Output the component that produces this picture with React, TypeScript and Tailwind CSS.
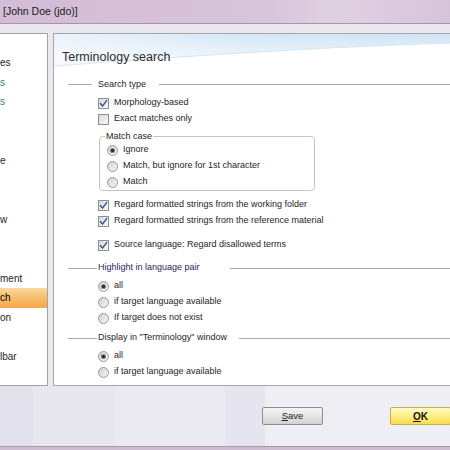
import React, { useId } from "react";

function CheckBox({ checked }: { checked?: boolean }) {
  const id = useId().replace(/:/g, "");
  return (
    <svg width="11" height="11" viewBox="0 0 11 11" className="shrink-0">
      <defs>
        <linearGradient id={`cb${id}`} x1="0" y1="0" x2="1" y2="1">
          <stop offset="0" stopColor="#d6d6d6" />
          <stop offset="1" stopColor="#fbfbfb" />
        </linearGradient>
      </defs>
      <rect x="0.5" y="0.5" width="10" height="10" fill={`url(#cb${id})`} stroke="#8e8f8f" />
      {checked && (
        <path d="M2.4 5.6 L4.5 8.1 L8.6 2.6" stroke="#3d5688" strokeWidth="1.5" fill="none" strokeLinecap="round" strokeLinejoin="round" />
      )}
    </svg>
  );
}

function Radio({ checked }: { checked?: boolean }) {
  const id = useId().replace(/:/g, "");
  return (
    <svg width="11" height="11" viewBox="0 0 11 11" className="shrink-0">
      <defs>
        <linearGradient id={`rb${id}`} x1="0" y1="0" x2="1" y2="1">
          <stop offset="0" stopColor="#cfcfcf" />
          <stop offset="1" stopColor="#f8f8f8" />
        </linearGradient>
      </defs>
      <circle cx="5.5" cy="5.5" r="5" fill={`url(#rb${id})`} stroke="#9a9a9a" />
      {checked && (
        <>
          <circle cx="5.5" cy="5.5" r="2.6" fill="#8a8a8a" />
          <circle cx="5.5" cy="5.5" r="1.6" fill="#262626" />
        </>
      )}
    </svg>
  );
}

function CheckRow({ label, checked }: { label: string; checked?: boolean }) {
  return (
    <div className="flex items-center gap-[5px] h-[16px]">
      <CheckBox checked={checked} />
      <span>{label}</span>
    </div>
  );
}

function RadioRow({ label, checked }: { label: string; checked?: boolean }) {
  return (
    <div className="flex items-center gap-[5px] h-[16px]">
      <Radio checked={checked} />
      <span>{label}</span>
    </div>
  );
}

const leftItems: { t: string; cls?: string; sel?: boolean }[] = [
  { t: "es" },
  { t: "s", cls: "text-[#3b7385]" },
  { t: "s", cls: "text-[#3b7385]" },
  { t: "" },
  { t: "" },
  { t: "e" },
  { t: "" },
  { t: "" },
  { t: "w" },
  { t: "" },
  { t: "" },
  { t: "ment" },
  { t: "ch", sel: true },
  { t: "on" },
  { t: "" },
  { t: "lbar" },
];

export default function App() {
  return (
    <div className="w-[450px] h-[450px] overflow-hidden flex flex-col font-['Liberation_Sans',Arial,sans-serif] text-[#1e1e1e] bg-[#ebe8ef]">
      {/* Title bar */}
      <div className="h-[24px] shrink-0 flex items-center pl-[3px] border-b border-[#a597a8] bg-[linear-gradient(90deg,#d3bcd6_0%,#d8c5da_60%,#e0d1e2_75%,#d6c3d9_100%)] text-[10.5px] text-[#1a1a1a]">
        [John Doe (jdo)]
      </div>
      <div className="h-[9px] shrink-0 bg-[#ebe7ef]" />

      {/* Panels */}
      <div className="h-[353px] shrink-0 flex gap-[5px]">
        {/* left list */}
        <div className="w-[48px] shrink-0 bg-white border-t border-r border-b border-[#a3a3a3] overflow-hidden pt-[19px] text-[10px]">
          {leftItems.map((it, i) => (
            <div
              key={i}
              className={`h-[19.6px] flex items-center whitespace-nowrap ${
                it.sel ? "bg-[linear-gradient(180deg,#fcd9a0_0%,#f8bd6c_50%,#f5a84a_100%)] text-black" : ""
              }`}
            >
              <span className={it.cls}>{it.t}</span>
            </div>
          ))}
        </div>

        {/* right panel */}
        <div className="flex-1 bg-white border-t border-l border-b border-[#a6a6a6] flex flex-col text-[9px] overflow-hidden">
          {/* header */}
          <div className="relative h-[43px] shrink-0 flex items-center pl-[8px] pt-[3px]">
            <svg className="absolute left-0 top-0" width="400" height="43" viewBox="0 0 400 43" preserveAspectRatio="none">
              <defs>
                <linearGradient id="hdrg" x1="0" y1="0" x2="0" y2="1">
                  <stop offset="0" stopColor="#cfe4f6" />
                  <stop offset="1" stopColor="#f4f9fd" />
                </linearGradient>
                <linearGradient id="hdrw" x1="0" y1="0" x2="1" y2="0">
                  <stop offset="0" stopColor="#ffffff" stopOpacity="0.55" />
                  <stop offset="0.5" stopColor="#ffffff" stopOpacity="0.1" />
                  <stop offset="1" stopColor="#ffffff" stopOpacity="0" />
                </linearGradient>
              </defs>
              <path d="M0 0 H400 V9 Q250 13 0 32 Z" fill="url(#hdrg)" />
              <path d="M0 0 H400 V9 Q250 13 0 32 Z" fill="url(#hdrw)" />
              <path d="M0 32 Q250 13 400 9" stroke="#d3e6f4" strokeWidth="1" fill="none" />
            </svg>
            <span className="relative text-[12.5px] text-[#2b2b2b]">Terminology search</span>
          </div>

          {/* Search type legend */}
          <div className="h-[15px] shrink-0 flex items-center pl-[14px]">
            <div className="w-[24px] h-px bg-[#a9a9a9]" />
            <span className="ml-[6px] text-[#262626]">Search type</span>
            <div className="flex-1 h-px bg-[#a9a9a9] ml-[13px]" />
          </div>

          <div className="pl-[44px] mt-[3px]">
            <CheckRow label="Morphology-based" checked />
            <CheckRow label="Exact matches only" />
          </div>

          <fieldset className="ml-[45px] mt-[3px] w-[216px] border border-[#c4c4c4] rounded-[4px] pl-[7px] pb-0 pt-0">
            <legend className="ml-[-2px] px-[1px] leading-[12px]">Match case</legend>
            <RadioRow label="Ignore" checked />
            <RadioRow label="Match, but ignore for 1st character" />
            <RadioRow label="Match" />
          </fieldset>

          <div className="pl-[44px] mt-[6px]">
            <CheckRow label="Regard formatted strings from the working folder" checked />
            <CheckRow label="Regard formatted strings from the reference material" checked />
          </div>
          <div className="pl-[44px] mt-[8px]">
            <CheckRow label="Source language: Regard disallowed terms" checked />
          </div>

          {/* Highlight legend */}
          <div className="h-[14px] shrink-0 flex items-center pl-[14px] mt-[8px]">
            <div className="w-[29px] h-px bg-[#a9a9a9]" />
            <span className="ml-[1px] text-[#1f2660]">Highlight in language pair</span>
            <div className="flex-1 h-px bg-[#a9a9a9] ml-[30px]" />
          </div>
          <div className="pl-[44px] mt-[3px]">
            <RadioRow label="all" checked />
            <RadioRow label="if target language available" />
            <RadioRow label="If target does not exist" />
          </div>

          {/* Display legend */}
          <div className="h-[14px] shrink-0 flex items-center pl-[14px] mt-[5px]">
            <div className="w-[29px] h-px bg-[#a9a9a9]" />
            <span className="ml-[1px] text-[#262626]">Display in "Terminology" window</span>
            <div className="flex-1 h-px bg-[#a9a9a9] ml-[12px]" />
          </div>
          <div className="pl-[44px] mt-[3px]">
            <RadioRow label="all" checked />
            <RadioRow label="if target language available" />
          </div>
        </div>
      </div>

      {/* bottom button area */}
      <div className="h-[60px] shrink-0 flex items-start pt-[21px] pl-[262px] gap-[67px] bg-[linear-gradient(90deg,#e3e1eb_0px,#e3e1eb_33px,#e8e6ef_33px,#e8e6ef_115px,#ebe9f1_115px,#ebe9f1_225px,#e6e4ee_225px,#e6e4ee_265px,#efeef5_265px)]">
        <button className="w-[61px] h-[18px] shrink-0 rounded-[2px] border border-[#8f8f8f] bg-[linear-gradient(180deg,#f4f4f4_0%,#e6e6e6_50%,#d2d2d2_100%)] text-[9.5px] text-[#222] flex items-center justify-center">
          <span><span className="underline">S</span>ave</span>
        </button>
        <button className="w-[61px] h-[18px] shrink-0 rounded-[2px] border border-[#c9ad48] bg-[linear-gradient(180deg,#fffbd0_0%,#fff08a_45%,#f6dd4e_100%)] text-[10px] font-bold text-[#111] flex items-center justify-center">
          <span><span className="underline">O</span>K</span>
        </button>
      </div>
      <div className="h-px shrink-0 bg-[#a699ac]" />
      <div className="h-[3px] shrink-0 bg-[#cdbbd0]" />
    </div>
  );
}
